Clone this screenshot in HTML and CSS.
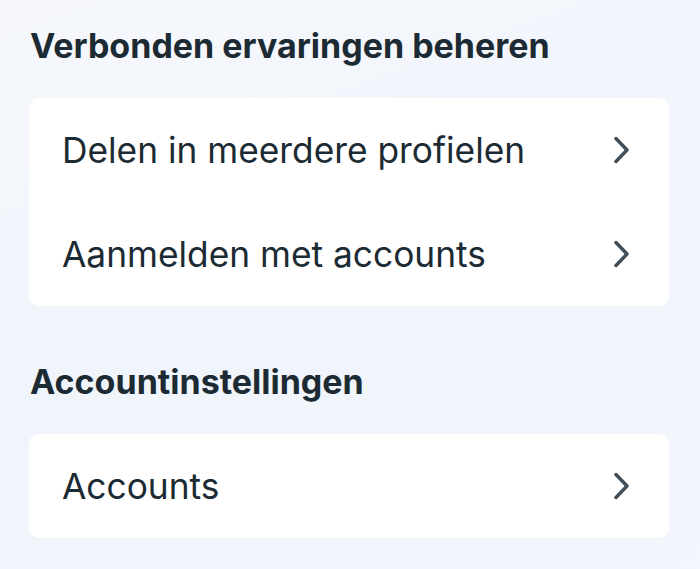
FILE: index.html
```html
<!DOCTYPE html>
<html lang="nl">
<head>
<meta charset="utf-8">
<title>Verbonden ervaringen</title>
<link rel="stylesheet" href="styles.css">
</head>
<body>
<main class="page">
  <section class="section">
    <h2 class="heading">Verbonden ervaringen beheren</h2>
    <div class="card">
      <div class="row">
        <span class="label">Delen in meerdere profielen</span>
        <svg class="chev" width="16" height="28" viewBox="0 0 16 28"><path d="M2 2.5 L13 14 L2 25.5" fill="none" stroke="#404e5a" stroke-width="3.4" stroke-linecap="round" stroke-linejoin="round"/></svg>
      </div>
      <div class="row">
        <span class="label">Aanmelden met accounts</span>
        <svg class="chev" width="16" height="28" viewBox="0 0 16 28"><path d="M2 2.5 L13 14 L2 25.5" fill="none" stroke="#404e5a" stroke-width="3.4" stroke-linecap="round" stroke-linejoin="round"/></svg>
      </div>
    </div>
  </section>
  <section class="section">
    <h2 class="heading">Accountinstellingen</h2>
    <div class="card">
      <div class="row">
        <span class="label">Accounts</span>
        <svg class="chev" width="16" height="28" viewBox="0 0 16 28"><path d="M2 2.5 L13 14 L2 25.5" fill="none" stroke="#404e5a" stroke-width="3.4" stroke-linecap="round" stroke-linejoin="round"/></svg>
      </div>
    </div>
  </section>
</main>
</body>
</html>
```
FILE: styles.css
```css
html, body {
  margin: 0;
  padding: 0;
  height: 100%;
}
body {
  background: linear-gradient(160deg, #f6f8fc 0%, #f0f4fb 50%, #f3f6fc 100%);
  font-family: "Inter", "Lato", sans-serif;
  color: #1c2b33;
}
.page {
  padding: 26px 31px 0 29px;
  display: flex;
  flex-direction: column;
  gap: 56px;
}
.heading {
  margin: 0 0 32px 1px;
  height: 40px;
  line-height: 40px;
  font-size: 34px;
  font-weight: 700;
  letter-spacing: 0;
}
.card {
  background: #ffffff;
  border-radius: 10px;
  display: flex;
  flex-direction: column;
}
.row {
  height: 104px;
  display: flex;
  align-items: center;
  justify-content: space-between;
  padding: 0 39px 0 33px;
}
.label {
  font-size: 35.3px;
  letter-spacing: 0;
}
.chev {
  display: block;
}
```
